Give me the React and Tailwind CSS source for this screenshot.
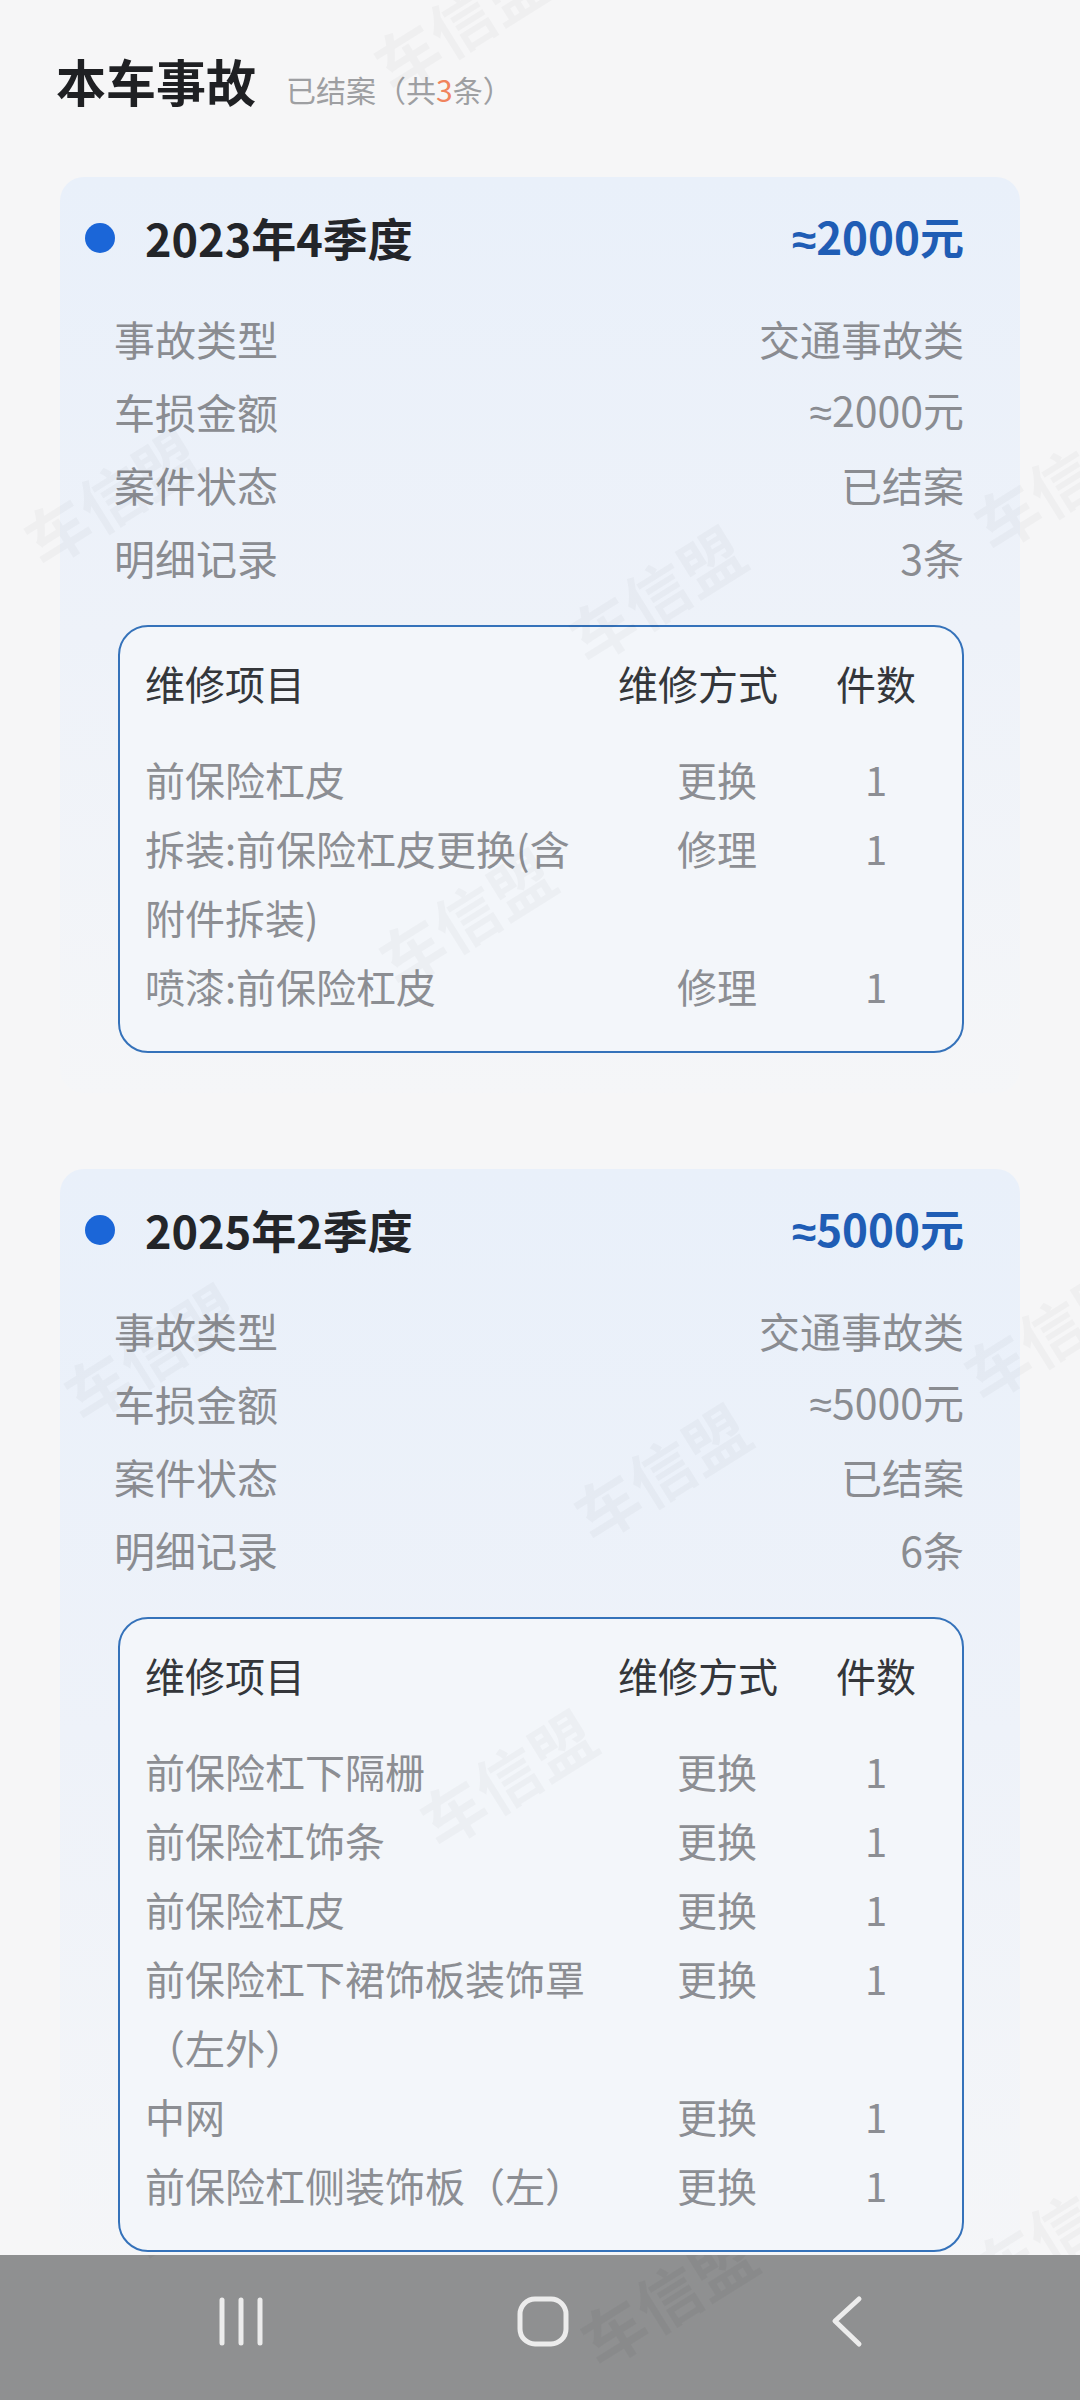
import React from "react";

const card1Items = [
  ["前保险杠皮", "更换", "1"],
  ["拆装:前保险杠皮更换(含附件拆装)", "修理", "1"],
  ["喷漆:前保险杠皮", "修理", "1"],
];

const card2Items = [
  ["前保险杠下隔栅", "更换", "1"],
  ["前保险杠饰条", "更换", "1"],
  ["前保险杠皮", "更换", "1"],
  ["前保险杠下裙饰板装饰罩（左外）", "更换", "1"],
  ["中网", "更换", "1"],
  ["前保险杠侧装饰板（左）", "更换", "1"],
];

function Approx({ value }) {
  return (
    <span className="leading-none">
      <span className="font-['Liberation_Sans','Noto_Sans',sans-serif] leading-none">≈</span>
      {value}
    </span>
  );
}

function Card({ period, amount, count, items, className }) {
  const rows = [
    ["事故类型", "交通事故类"],
    ["车损金额", <Approx value={amount} />],
    ["案件状态", "已结案"],
    ["明细记录", count],
  ];
  return (
    <div className={"rounded-[24px] bg-linear-to-b from-[#e9f0fa] via-[#eef2f9] to-[#f5f6f8] pl-[25px] pr-[56px] pt-[31px] pb-[40px] " + className}>
      <div className="flex h-[60px] items-center">
        <div className="h-[30px] w-[30px] rounded-full bg-[#1b66d8]" />
        <div className="ml-[30px] text-[45px] font-bold leading-[60px] text-[#232529]">{period}</div>
        <div className="ml-auto flex h-[60px] items-center text-[44px] font-bold text-[#1f5db5]">
          <Approx value={amount} />
        </div>
      </div>
      <div className="mt-[34px] pl-[29px] text-[41px] text-[#8a8c91]">
        {rows.map(([k, v]) => (
          <div key={k} className="flex h-[73px] items-center justify-between overflow-visible">
            <span className="leading-none">{k}</span>
            <span className="leading-none">{v}</span>
          </div>
        ))}
      </div>
      <div className="ml-[33px] mt-[31px] rounded-[30px] border-2 border-[#3572ba] bg-[#f3f6fa] pb-[30px] pl-[25px] pr-[46px] pt-[22px]">
        <div className="grid grid-cols-[1fr_198px_80px] gap-x-[20px] text-[40px] leading-[69px] text-[#34363a]">
          <div>维修项目</div>
          <div>维修方式</div>
          <div>件数</div>
        </div>
        <div className="mt-[27px] grid grid-cols-[1fr_198px_80px] gap-x-[20px] text-[40px] leading-[69px] text-[#8c8e93]">
          {items.map(([a, b, c], i) => (
            <React.Fragment key={i}>
              <div>{a}</div>
              <div className="text-center">{b}</div>
              <div className="text-center">{c}</div>
            </React.Fragment>
          ))}
        </div>
      </div>
    </div>
  );
}

function Watermark({ className }) {
  return (
    <div
      className={
        "pointer-events-none absolute -translate-x-1/2 -translate-y-1/2 rotate-[-32deg] whitespace-nowrap text-[64px] font-bold text-black/[0.028] " +
        className
      }
    >
      车信盟
    </div>
  );
}

export default function App() {
  return (
    <div className="relative h-[2400px] w-[1080px] overflow-hidden bg-[#f6f6f7] px-[60px] pt-[50px] font-['Noto_Sans_CJK_SC','Noto_Sans',sans-serif]">
      <div className="ml-[-4px] flex items-baseline">
        <div className="text-[50px] font-bold leading-[60px] text-[#1f2023]">本车事故</div>
        <div className="ml-[30px] text-[30px] text-[#9e9fa2]">
          已结案（共<span className="text-[#f0845e]">3</span>条）
        </div>
      </div>

      <Card className="mt-[65px]" period="2023年4季度" amount="2000元" count="3条" items={card1Items} />
      <Card className="mt-[76px]" period="2025年2季度" amount="5000元" count="6条" items={card2Items} />

      <Watermark className="left-[460px] top-[20px]" />
      <Watermark className="left-[655px] top-[592px]" />
      <Watermark className="left-[465px] top-[915px]" />
      <Watermark className="left-[110px] top-[495px]" />
      <Watermark className="left-[1060px] top-[480px]" />
      <Watermark className="left-[150px] top-[1350px]" />
      <Watermark className="left-[660px] top-[1470px]" />
      <Watermark className="left-[1050px] top-[1330px]" />
      <Watermark className="left-[506px] top-[1776px]" />
      <Watermark className="left-[1060px] top-[2225px]" />

      <div className="absolute bottom-0 left-0 h-[145px] w-[1080px] bg-[#8f9091]">
        <svg className="absolute left-0 top-0" width="1080" height="145" viewBox="0 2255 1080 145">
          <g stroke="#ececec" strokeWidth="5" strokeLinecap="round" fill="none" strokeLinejoin="round">
            <line x1="222" y1="2300" x2="222" y2="2343" />
            <line x1="241" y1="2300" x2="241" y2="2343" />
            <line x1="260" y1="2300" x2="260" y2="2343" />
            <rect x="520" y="2299" width="46" height="45" rx="15" />
            <polyline points="859,2299 835,2321 859,2344" />
          </g>
          <text x="150" y="2265" fontSize="64" fontWeight="700" fill="rgba(0,0,0,0.035)" transform="rotate(-32 150 2265)" fontFamily="Noto Sans CJK SC">车信盟</text>
          <text x="600" y="2370" fontSize="64" fontWeight="700" fill="rgba(0,0,0,0.035)" transform="rotate(-32 600 2370)" fontFamily="Noto Sans CJK SC">车信盟</text>
        </svg>
      </div>
    </div>
  );
}
